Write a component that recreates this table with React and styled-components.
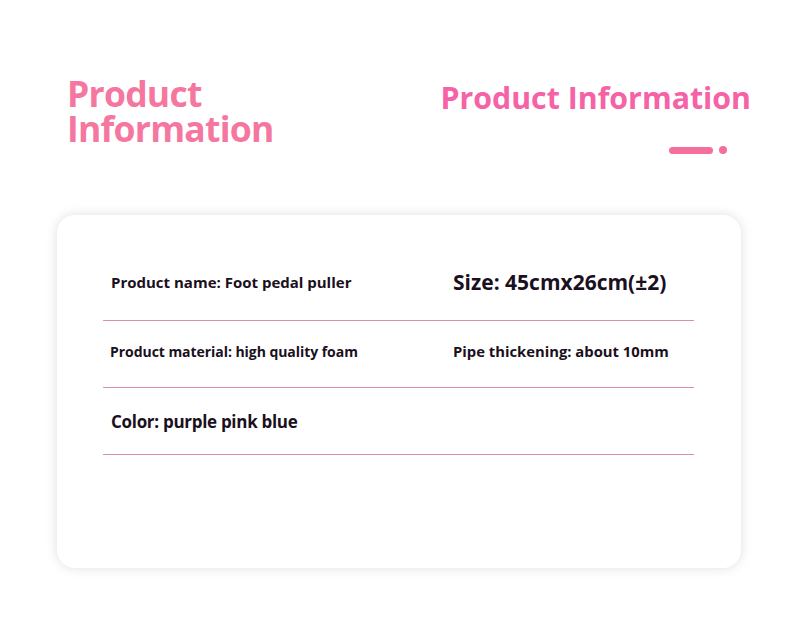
import styled, { createGlobalStyle } from 'styled-components';

const GlobalStyle = createGlobalStyle`
  html, body {
    margin: 0;
    padding: 0;
    background: #ffffff;
  }
  body {
    font-family: "Open Sans", Lato, sans-serif;
  }
`;

const Page = styled.div`
  width: 790px;
  height: 643px;
  box-sizing: border-box;
  padding: 76px 39px 0 57px;
  overflow: hidden;
`;

const Header = styled.header`
  display: flex;
  justify-content: space-between;
  align-items: flex-start;
  height: 139px;
`;

const BigTitle = styled.h1`
  margin: 0 0 0 10px;
  font-family: "Open Sans", sans-serif;
  font-weight: 700;
  font-size: 35.5px;
  letter-spacing: -0.75px;
  color: #f5779f;
`;

const TitleLine = styled.span`
  display: block;
  height: 35px;
  line-height: 35px;
  overflow: visible;
`;

const SideBlock = styled.div`
  display: flex;
  flex-direction: column;
  align-items: flex-end;
  padding-top: 4px;
`;

const SideTitle = styled.h2`
  margin: 0;
  font-family: "Open Sans", sans-serif;
  font-weight: 700;
  font-size: 30.3px;
  line-height: 36px;
  color: #f662a6;
`;

const Marks = styled.div`
  display: flex;
  align-items: center;
  gap: 6px;
  margin-top: 30px;
  margin-right: 24px;
`;

const Dash = styled.span`
  display: block;
  width: 44px;
  height: 7px;
  border-radius: 4px;
  background: #f56f9c;
`;

const Dot = styled.span`
  display: block;
  width: 8px;
  height: 8px;
  border-radius: 50%;
  background: #f56f9c;
`;

const Card = styled.section`
  width: 684px;
  height: 353px;
  box-sizing: border-box;
  padding: 39px 0 0 46px;
  border-radius: 18px;
  background: #ffffff;
  box-shadow: 0 0 12px rgba(0, 0, 0, 0.13);
`;

const List = styled.div`
  width: 591px;
`;

const Row = styled.div`
  display: grid;
  grid-template-columns: 350px 1fr;
  align-items: center;
  height: 67px;
  box-sizing: border-box;
  padding-bottom: ${({ $shift }) => $shift}px;
  border-bottom: 1px solid #dc8fb0;
`;

const Cell = styled.div`
  padding-left: ${({ $indent }) => $indent}px;
  font-family: "Open Sans", sans-serif;
  font-weight: 700;
  font-size: ${({ $size }) => $size}px;
  letter-spacing: ${({ $track }) => $track}px;
  color: #1a1020;
  white-space: nowrap;
`;

const rows = [
  {
    shift: 10,
    left: { text: 'Product name: Foot pedal puller', size: 15, indent: 8, track: 0 },
    right: { text: 'Size: 45cmx26cm(±2)', size: 21, indent: 0, track: 0 },
  },
  {
    shift: 6,
    left: { text: 'Product material: high quality foam', size: 14, indent: 7, track: -0.05 },
    right: { text: 'Pipe thickening: about 10mm', size: 14.8, indent: -1, track: 0 },
  },
  {
    shift: -2,
    left: { text: 'Color: purple pink blue', size: 17, indent: 8, track: -0.3 },
    right: null,
  },
];

export default function App() {
  return (
    <>
      <GlobalStyle />
      <Page>
        <Header>
          <BigTitle>
            <TitleLine>Product</TitleLine>
            <TitleLine>Information</TitleLine>
          </BigTitle>
          <SideBlock>
            <SideTitle>Product Information</SideTitle>
            <Marks>
              <Dash />
              <Dot />
            </Marks>
          </SideBlock>
        </Header>
        <Card>
          <List>
            {rows.map((row, i) => (
              <Row key={i} $shift={row.shift}>
                <Cell $size={row.left.size} $indent={row.left.indent} $track={row.left.track}>
                  {row.left.text}
                </Cell>
                {row.right ? (
                  <Cell $size={row.right.size} $indent={row.right.indent} $track={row.right.track}>
                    {row.right.text}
                  </Cell>
                ) : (
                  <span />
                )}
              </Row>
            ))}
          </List>
        </Card>
      </Page>
    </>
  );
}
